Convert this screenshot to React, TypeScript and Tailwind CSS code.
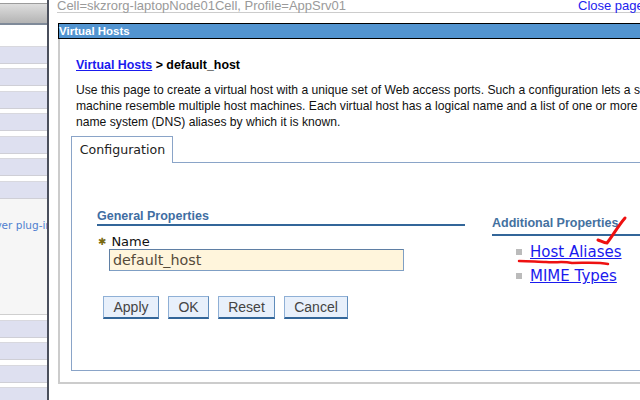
export default function App() {
  const sans = "font-['Liberation_Sans',Arial,sans-serif]";
  const deja = "font-['DejaVu_Sans',sans-serif]";
  const Row = ({ mt }: { mt: string }) => (
    <div className={`h-[18px] shrink-0 bg-[#dee0f0] border-b border-[#cfcfd6] border-t border-t-[#d8d8de] ${mt}`} />
  );
  const Btn = ({ label, w }: { label: string; w: string }) => (
    <button className={`h-[23px] ${w} bg-[#e8f0fb] border border-[#8fb0d6] border-b-2 border-b-[#336699] border-r-[#5f8cbb] text-[14px] leading-none text-[#444] ${sans}`}>
      {label}
    </button>
  );
  return (
    <div className={`relative flex h-[400px] w-[640px] overflow-hidden bg-white ${sans}`}>
      <aside className="flex h-full w-[49px] shrink-0 flex-col border-r-2 border-[#4a4f5c]">
        <div className="mt-[3px] h-[22px] shrink-0 border-y border-t-[#9b9b9b] border-b-2 border-b-[#7f8a99] bg-gradient-to-b from-[#dedede] to-[#b4b4b4]" />
        <Row mt="mt-[21px]" />
        <Row mt="mt-[4px]" />
        <Row mt="mt-[5px]" />
        <Row mt="mt-[4px]" />
        <Row mt="mt-[5px]" />
        <Row mt="mt-[4px]" />
        <Row mt="mt-[5px]" />
        <div className="flex h-[116px] shrink-0 items-start justify-end overflow-hidden whitespace-nowrap border-b border-[#cfcfcf] bg-[#f6f6f6] pt-[20px] text-[10.5px] leading-[13px] text-[#4f7fd0]">
          <span className={`-mr-[5px] ${deja}`}>Web server plug-in</span>
        </div>
        <Row mt="mt-[5px]" />
        <Row mt="mt-[4px]" />
        <Row mt="mt-[5px]" />
        <Row mt="mt-[4px]" />
      </aside>

      <main className="flex min-w-0 flex-1 flex-col pl-[9px]">
        <div className="-ml-[1px] flex h-[13px] shrink-0 items-end justify-between whitespace-nowrap border-b border-[#cccccc] text-[13px] leading-[15px]">
          <span className="-mb-[1px] text-[#9a9a9a]">Cell=skzrorg-laptopNode01Cell, Profile=AppSrv01</span>
          <span className="-mb-[1px] w-[62px] overflow-hidden text-[#2222ee]">Close page</span>
        </div>
        <section className="mt-[10px] flex h-[361px] w-[600px] shrink-0 flex-col border-b-2 border-l-2 border-[#cccccc]">
          <div className="-ml-[2px] h-[16px] shrink-0 border-y border-l border-black bg-[#5294d0] pl-0 text-[11.5px] font-bold leading-[14px] text-white">
            Virtual Hosts
          </div>
          <div className="flex min-h-0 flex-1 flex-col pl-[16px]">
            <div className="mt-[19px] whitespace-nowrap text-[12.4px] font-bold leading-[14px] text-black">
              <a className="text-[#1a1aee] underline">Virtual Hosts</a> &gt; default_host
            </div>
            <div className="mt-[10px] whitespace-nowrap text-[12.15px] leading-[16px] text-[#111]">
              <div>Use this page to create a virtual host with a unique set of Web access ports. Such a configuration lets a single</div>
              <div>machine resemble multiple host machines. Each virtual host has a logical name and a list of one or more domain</div>
              <div>name system (DNS) aliases by which it is known.</div>
            </div>
            <div className={`relative z-10 mt-[6px] -mb-px ml-[-5px] flex h-[27px] w-[102px] items-center justify-center border border-b-0 border-[#8aa4c8] bg-white pl-[1px] text-[12.6px] text-[#222] ${deja}`}>
              Configuration
            </div>
            <div className="ml-[-5px] flex h-[209px] shrink-0 border border-[#8aa4c8] pl-[25px]">
              <div className="w-[368px] shrink-0">
                <div className="mt-[46px] border-b-2 border-[#336699] text-[12.5px] font-bold leading-[15px] text-[#3f6ea3]">
                  General Properties
                </div>
                <div className={`mt-[8px] flex items-center text-[13px] leading-[15px] text-[#111] ${deja}`}>
                  <span className="mr-[5px] ml-[1px] text-[10px] leading-none text-[#7a6a10]">✱</span>
                  Name
                </div>
                <div className={`ml-[12px] h-[22px] w-[295px] border border-[#7f9fc4] border-l-[#5f7fa4] border-t-[#5f7fa4] bg-[#fff5dc] pl-[3px] text-[14.3px] leading-[20px] text-[#554a3a] ${deja}`}>
                  default_host
                </div>
                <div className="mt-[25px] ml-[6px] flex gap-[9px]">
                  <Btn label="Apply" w="w-[56px]" />
                  <Btn label="OK" w="w-[41px]" />
                  <Btn label="Reset" w="w-[57px]" />
                  <Btn label="Cancel" w="w-[64px]" />
                </div>
              </div>
              <div className="ml-[27px] flex-1">
                <div className="mt-[52px] whitespace-nowrap border-b-2 border-[#336699] pb-[3px] text-[12.5px] font-bold leading-[16px] text-[#44719f]">
                  Additional Properties
                </div>
                <ul className={`mt-[4px] ml-[24px] text-[15px] leading-[24px] text-[#1a1aee] ${deja}`}>
                  <li className="flex items-center gap-[8px]">
                    <span className="h-[6px] w-[6px] bg-[#bbbbbb]" />
                    <a className="underline">Host Aliases</a>
                  </li>
                  <li className="flex items-center gap-[8px]">
                    <span className="h-[6px] w-[6px] bg-[#bbbbbb]" />
                    <a className="underline">MIME Types</a>
                  </li>
                </ul>
              </div>
            </div>
          </div>
        </section>
      </main>

      <svg className="pointer-events-none absolute left-0 top-0" width="640" height="400" fill="none" stroke="#ee1111" strokeLinecap="round" strokeLinejoin="round">
        <path d="M519 261 C530 261 538 262 546 262 C556 263 562 261 572 263 C585 263 598 262 608 264" strokeWidth="2.5" />
        <path d="M598 240 C601 241 604 243 607 243 C612 237 618 226 625 218" strokeWidth="3" />
      </svg>
    </div>
  );
}
